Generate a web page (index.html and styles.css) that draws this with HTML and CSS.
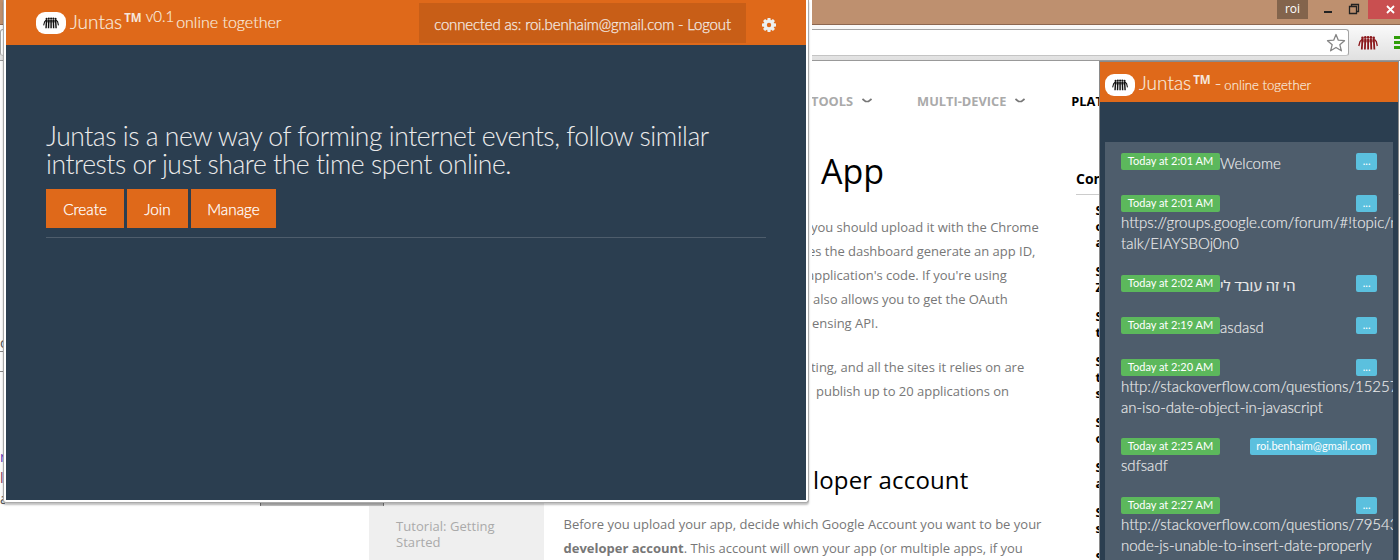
FILE: index.html
```html
<!DOCTYPE html>
<html lang="en">
<head>
<meta charset="utf-8">
<title>Juntas</title>
<link rel="stylesheet" href="styles.css">
</head>
<body>
<svg class="defs" width="0" height="0">
  <symbol id="people" viewBox="0 0 20 14">
    <g fill="currentColor"><circle cx="4.5" cy="1.800" r="1.300"/><circle cx="7.300" cy="1.400" r="1.300"/><circle cx="10.100" cy="1.300" r="1.300"/><circle cx="12.900" cy="1.400" r="1.300"/><circle cx="15.700" cy="1.800" r="1.300"/></g>
    <path d="M4 3.500 2 5.500.8 10M16.500 3.500 18.300 5.500 19.300 10" fill="none" stroke="currentColor" stroke-width="1.300"/>
    <path d="M4.500 2.500 3.800 13.500M7.300 2.500 6.900 13.500M10.100 2.500V13.500M12.900 2.500 13.300 13.500M15.700 2.500 16.400 13.500" fill="none" stroke="currentColor" stroke-width="1.800"/>
    <path d="M3.500 4.800h13" fill="none" stroke="currentColor" stroke-width="3" stroke-opacity=".6"/>
  </symbol>
</svg>
<div class="desktop">
  <div class="browser">
    <div class="titlebar">
      <div class="user">roi</div>
      <svg class="minmax" width="60" height="20" viewBox="0 0 60 20"><path d="M16 12h8" stroke="#222" stroke-width="2"/><path d="M41.500 6.500h7v7h-7zM43.500 6V4.500h7v7H49" fill="none" stroke="#222" stroke-width="1.300"/></svg>
      <div class="close"><svg width="9" height="9" viewBox="0 0 9 9"><path d="M1 1l7 7M8 1 1 8" stroke="#fff" stroke-width="1.800"/></svg></div>
    </div>
    <div class="toolbar">
      <div class="omnibox"><svg width="20" height="20" viewBox="0 0 20 20"><path d="M10 1.500 12.300 7.200 18.500 7.700 13.800 11.700 15.400 17.800 10 14.500 4.600 17.800 6.200 11.700 1.500 7.700 7.700 7.200z" fill="#fff" stroke="#858585" stroke-width="1.300" stroke-linejoin="round"/></svg></div>
      <svg class="ext" width="20" height="14"><use href="#people"/></svg>
      <div class="menu"><i></i><i></i><i></i></div>
    </div>
    <div class="page">
      <div class="left">
        <div class="spill">
          <div class="spill-top">c</div><div class="spill-box"></div>
          <div class="spill-a">r</div><div class="spill-b">l</div><div class="spill-c">a</div>
        </div>
      </div>
      <div class="sidenav">
        <div class="topic">Tutorial: Getting Started</div>
      </div>
      <div class="article">
        <div class="tabs">
          <span>TOOLS</span><svg width="10" height="6" viewBox="0 0 10 6"><path d="M.5 1 3.500 3.500h3L9.500 1" fill="none" stroke="#777" stroke-width="1.700"/></svg>
          <span class="second">MULTI-DEVICE</span><svg width="10" height="6" viewBox="0 0 10 6"><path d="M.5 1 3.500 3.500h3L9.500 1" fill="none" stroke="#777" stroke-width="1.700"/></svg>
          <span class="current">PLATFORM</span>
        </div>
        <h1>App</h1>
        <p class="tail"><span class="l1">you should upload it with the Chrome</span><span class="l2">es the dashboard generate an app ID,</span><span class="l3">application's code. If you're using</span><span class="l4">also allows you to get the OAuth</span><span class="l5">ensing API.</span></p>
        <p class="tail"><span class="l6">ting, and all the sites it relies on are</span><span class="l7">publish up to 20 applications on</span></p>
        <h2>loper account</h2>
        <p class="full"><span>Before you upload your app, decide which Google Account you want to be your</span><span><b>developer account</b>. This account will own your app (or multiple apps, if you</span></p>
      </div>
      <div class="toc">
        <div class="toc-title">Contents</div>
        <ul><li>S<br>o<br>a</li><li>S<br>Z</li><li>S<br>t</li><li>S<br>t<br>s</li><li>S<br>o</li><li>S<br>a</li><li>S<br>s</li><li>S</li></ul>
      </div>
    </div>
  </div>

  <div class="panel">
    <div class="panel-head">
      <span class="logo"><svg width="16" height="12"><use href="#people"/></svg></span>
      <span class="brand">Juntas</span><span class="tm">TM</span><span class="dash">-</span><span class="tag">online together</span>
    </div>
    <div class="feed">
      <div class="item"><div class="row"><span class="time">Today at 2:01 AM</span><span class="msg">Welcome</span><span class="who">...</span></div></div>
      <div class="item long"><div class="row"><span class="time">Today at 2:01 AM</span><span class="who">...</span></div><div class="text">https://groups.google.com/forum/#!topic/n<br>talk/EIAYSBOj0n0</div></div>
      <div class="item"><div class="row"><span class="time">Today at 2:02 AM</span><span class="msg he" dir="rtl">הי זה עובד לי</span><span class="who">...</span></div></div>
      <div class="item"><div class="row"><span class="time">Today at 2:19 AM</span><span class="msg">asdasd</span><span class="who">...</span></div></div>
      <div class="item long"><div class="row"><span class="time">Today at 2:20 AM</span><span class="who">...</span></div><div class="text">http://stackoverflow.com/questions/15257<br>an-iso-date-object-in-javascript</div></div>
      <div class="item long"><div class="row"><span class="time">Today at 2:25 AM</span><span class="who">roi.benhaim@gmail.com</span></div><div class="text">sdfsadf</div></div>
      <div class="item long"><div class="row"><span class="time">Today at 2:27 AM</span><span class="who">...</span></div><div class="text">http://stackoverflow.com/questions/79543<br>node-js-unable-to-insert-date-properly</div></div>
    </div>
  </div>

  <div class="tooltip-edge"></div>
  <div class="popup">
    <div class="frame">
      <div class="app">
        <div class="navbar">
          <span class="logo"><svg width="16" height="12"><use href="#people"/></svg></span>
          <span class="brand">Juntas</span><span class="tm">TM</span><span class="version">v0.1</span><span class="tag">online together</span>
          <div class="account">connected as: roi.benhaim@gmail.com - Logout</div>
          <svg class="gear" width="14" height="14" viewBox="0 0 14 14"><g fill="#ecf0f1"><circle cx="7" cy="7" r="5"/><path d="M5.600 0h2.800l.5 3H5.100zM5.600 14h2.800l.5-3H5.100zM0 5.600v2.800l3 .5V5.100zM14 5.600v2.800l-3 .5V5.100z"/><path d="M5.600 0h2.800l.5 3H5.100zM5.600 14h2.800l.5-3H5.100zM0 5.600v2.800l3 .5V5.100zM14 5.600v2.800l-3 .5V5.100z" transform="rotate(45 7 7)"/></g><circle cx="7" cy="7" r="2.200" fill="#df691a"/></svg>
        </div>
        <div class="hero">
          <div class="lead"><span>Juntas is a new way of forming internet events, follow similar</span><span>intrests or just share the time spent online.</span></div>
          <div class="buttons"><a class="create">Create</a><a class="join">Join</a><a class="manage">Manage</a></div>
        </div>
      </div>
    </div>
  </div>
</div>
</body>
</html>
```
FILE: styles.css
```css
* { box-sizing: border-box; }
body { margin: 0; font-family: "Open Sans", sans-serif; }
.defs { display: block; position: absolute; }
.desktop { position: relative; width: 1400px; height: 560px; overflow: hidden; background: #fff; }
span { white-space: nowrap; }

/* browser window */
.browser { height: 560px; display: flex; flex-direction: column; }
.titlebar { height: 25px; flex: none; background: #be906f; border-bottom: 1px solid #8d6750; display: flex; justify-content: flex-end; }
.user { width: 31px; height: 19px; background: #83644c; color: #fff; font: 12px/18px "Open Sans", sans-serif; text-align: center; }
.minmax { flex: none; }
.close { width: 32px; height: 19px; background: #c94f50; padding: 5px 0 0 18px; }
.close svg { display: block; }
.toolbar { height: 36px; flex: none; background: linear-gradient(#fafafa, #e0e0e0); border-bottom: 1px solid #999; display: flex; padding-top: 4px; overflow: hidden; }
.omnibox { width: 1349px; height: 27px; flex: none; background: #fff; border: 1px solid #a4a4a4; border-bottom-color: #c4c4c4; border-radius: 3px; display: flex; justify-content: flex-end; padding: 3px 2px 0 0; }
.ext { margin: 7px 0 0 9px; flex: none; color: #8b171b; }
.menu { margin: 7px 0 0 16px; width: 15px; flex: none; display: flex; flex-direction: column; gap: 2px; }
.menu i { height: 3px; background: #2f9d08; }
.page { flex: 1; display: grid; grid-template-columns: 369px 175px 532px 324px; overflow: hidden; }
.spill { width: 5px; overflow: hidden; color: #555; font: 14px/16px "Open Sans", sans-serif; padding-top: 274px; background: #fcfcfc; height: 444px; }
.spill-box { height: 21px; border: solid #888; border-width: 1px 0; }
.spill-a, .spill-b, .spill-c { line-height: 21px; color: #6235b8; }
.spill-a { margin-top: 74px; }
.spill-b { color: #8a3a5c; }
.spill-c { color: #555; }
.sidenav { background: #efefef; padding: 457px 0 0 27px; }
.topic { width: 120px; font-size: 13px; line-height: 16px; color: #aaa; letter-spacing: .05px; }
.article { padding-left: 19.5px; color: #777; font-size: 13px; }
.tabs { height: 80px; display: flex; align-items: center; padding-left: 247.5px; font-size: 12.800px; font-weight: 700; color: #aaa; }
.tabs svg { margin-left: 9px; flex: none; }
.tabs .second { margin-left: 45px; }
.tabs .current { margin-left: 46px; color: #000; }
h1 { margin: 0; padding-left: 257.5px; font-size: 34px; line-height: 60px; font-weight: 400; color: #000; }
p { margin: 14px 0 0; line-height: 24px; }
p + p { margin-top: 20px; }
p span { display: block; }
.tail { padding-left: 247.5px; letter-spacing: -.02px; }
.l2 { margin-left: -3px; }
.l3 { margin-left: -4px; }
.l4 { margin-left: 2px; }
.l5 { margin-left: 1px; }
.l7 { margin-left: 5px; }
h2 { margin: 57px 0 0; padding-left: 249.5px; font-size: 24px; letter-spacing: .15px; line-height: 40px; font-weight: 400; color: #000; }
.full { margin-top: 12px; }
.toc { color: #000; font-weight: 700; }
.toc-title { margin-top: 104px; height: 30px; border-bottom: 1px solid #ccc; font-size: 14px; line-height: 27px; }
.toc ul { list-style: none; margin: 7px 0 0; padding: 0 0 0 19.5px; font-size: 13px; line-height: 16px; }
.toc li { margin-bottom: 13px; }

/* shared brand pieces */
.logo { width: 30px; height: 22px; border-radius: 9px; background: #fff; color: #111; display: flex; align-items: center; justify-content: center; flex: none; }
.logo svg { display: block; }
.brand, .tag, .version, .dash { font-family: Lato, sans-serif; font-weight: 300; color: #f8e8dc; -webkit-text-stroke: .2px; }
.tm { font: 700 11.500px/12px "Open Sans", sans-serif; color: #f6e6da; }

/* extension panel */
.panel { position: absolute; left: 1099px; top: 61px; width: 300px; height: 499px; background: #2b3e50; border: solid #8a8a8a; border-width: 1px 1px 0; overflow: hidden; font-family: Lato, sans-serif; }
.panel-head { height: 40px; background: #df691a; display: flex; padding: 0 0 0 5px; margin-bottom: 40px; }
.panel .logo { margin-top: 12px; }
.panel .brand { margin: 8px 0 0 4px; font-size: 19px; line-height: 26px; }
.panel .tm { margin: 12px 0 0 2px; }
.panel .dash { margin: 8px 0 0 4px; font-size: 18px; line-height: 26px; }
.panel .tag { margin: 13px 0 0 3px; font-size: 13.200px; line-height: 20px; }
.feed { margin: 0 5px; height: 418px; background: #4e5d6c; padding: 11px 16px 0; overflow: hidden; font-weight: 300; font-size: 15px; line-height: 21px; color: #ebebeb; -webkit-text-stroke: .15px; }
.item { height: 42px; }
.item.long { height: auto; padding-bottom: 20.5px; }
.row { display: flex; height: 17px; }
.time, .who { height: 17px; border-radius: 2px; color: #fff; font-size: 11px; line-height: 16px; font-weight: 400; text-align: center; flex: none; -webkit-text-stroke: 0; }
.time { width: 99px; background: #5cb85c; }
.who { margin-left: auto; min-width: 20px; padding: 0 6.5px; background: #5bc0de; }
.he { font-family: "Open Sans", "DejaVu Sans", sans-serif; font-weight: 400; font-size: 14.700px; }
.text { white-space: nowrap; }

/* edge of a button showing under the popup */
.tooltip-edge { position: absolute; left: 260px; top: 495px; width: 124px; height: 11px; background: #c4c4c4; border: solid #777; border-width: 0 1px; }

/* popup window */
.popup { position: absolute; left: 3px; top: 0; width: 809px; height: 503px; background: linear-gradient(#fff, #fff) right / 4px 100% no-repeat; }
.frame { width: 806px; height: 503px; border: 1px solid #aaa; border-top: 0; background: #fff; padding: 0 2px; box-shadow: 0 2px 2px rgba(0, 0, 0, .25); border-radius: 0 0 3px 3px; }
.app { height: 500px; width: 800px; background: #2b3e50; font-family: Lato, sans-serif; }
.navbar { height: 45px; background: #df691a; display: flex; padding-left: 30px; }
.navbar .logo { margin-top: 12px; }
.navbar .brand { margin: 8px 0 0 4px; font-size: 19px; line-height: 27px; }
.navbar .tm { margin: 12px 0 0 2px; }
.version { margin: 6px 0 0 4px; font-size: 15px; line-height: 20px; }
.navbar .tag { margin: 12px 0 0 2px; font-size: 16px; line-height: 20px; }
.account { margin: 3px 0 0 auto; width: 327px; height: 40px; flex: none; background: #c85e17; color: #f4ebe4; font-size: 15px; font-weight: 300; letter-spacing: -.16px; -webkit-text-stroke: .25px; line-height: 42px; text-align: center; white-space: nowrap; }
.gear { margin: 18px 30px 0 16px; flex: none; }
.hero { padding: 77px 40px 0; }
.lead { font-size: 26.500px; letter-spacing: -.46px; line-height: 28px; font-weight: 300; color: #ebebeb; }
.lead span { display: block; }
.buttons { display: flex; gap: 3px; padding: 11px 0 9px; border-bottom: 1px solid #4e5d6c; }
.buttons a { height: 39px; background: #df691a; color: #fff; font-size: 15.300px; font-weight: 300; -webkit-text-stroke: .25px; line-height: 40px; text-align: center; }
.create { width: 78px; }
.join { width: 61px; }
.manage { width: 85px; }
```
